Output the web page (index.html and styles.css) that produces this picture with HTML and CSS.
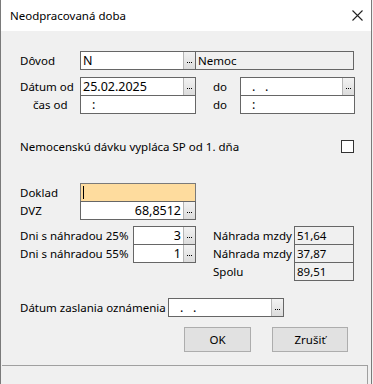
FILE: index.html
```html
<!DOCTYPE html>
<html lang="sk">
<head>
    <meta charset="UTF-8">
    <title>Neodpracovaná doba</title>
    <link rel="stylesheet" href="styles.css">
</head>
<body>
    <div class="window">
        <div class="titlebar">
            <span class="title">Neodpracovaná doba</span>
            <svg class="close" width="11" height="11" viewBox="0 0 11 11">
                <path d="M0.5 0.5 L10.5 10.5 M10.5 0.5 L0.5 10.5" stroke="#222" stroke-width="1.1" fill="none"/>
            </svg>
        </div>

        <div class="content">
            <div class="row">
                <span class="lbl w60">Dôvod</span>
                <div class="field w116"><span class="val">N</span><span class="btn"></span></div>
                <div class="field ro w159 join"><span class="val">Nemoc</span></div>
            </div>

            <div class="row gap7">
                <span class="lbl w60">Dátum od</span>
                <div class="field w116"><span class="val">25.02.2025</span><span class="btn"></span></div>
                <span class="lbl do">do</span>
                <div class="field w115"><span class="val mask"><i>.</i><i>.</i></span><span class="btn"></span></div>
            </div>
            <div class="row stack">
                <span class="lbl w60 indent">čas od</span>
                <div class="field w116"><span class="val mask"><i>:</i></span></div>
                <span class="lbl do">do</span>
                <div class="field w115"><span class="val mask"><i>:</i></span></div>
            </div>

            <div class="row gap23 check-row">
                <span class="lbl">Nemocenskú dávku vypláca SP od 1. dňa</span>
                <span class="checkbox"></span>
            </div>

            <div class="row gap27">
                <span class="lbl w60">Doklad</span>
                <div class="field w116 active"><span class="val"><span class="caret"></span></span></div>
            </div>
            <div class="row stack">
                <span class="lbl w60">DVZ</span>
                <div class="field w116"><span class="val num">68,8512</span><span class="btn"></span></div>
            </div>

            <div class="calc gap6">
                <div class="calc-col">
                    <div class="row">
                        <span class="lbl w113">Dni s náhradou 25%</span>
                        <div class="field w63"><span class="val num">3</span><span class="btn"></span></div>
                    </div>
                    <div class="row stack">
                        <span class="lbl w113">Dni s náhradou 55%</span>
                        <div class="field w63"><span class="val num">1</span><span class="btn"></span></div>
                    </div>
                </div>
                <div class="calc-col right">
                    <div class="row">
                        <span class="lbl w81">Náhrada mzdy</span>
                        <div class="field ro w60"><span class="val">51,64</span></div>
                    </div>
                    <div class="row stack">
                        <span class="lbl w81">Náhrada mzdy</span>
                        <div class="field ro w60"><span class="val">37,87</span></div>
                    </div>
                    <div class="row stack">
                        <span class="lbl w81">Spolu</span>
                        <div class="field ro w60"><span class="val">89,51</span></div>
                    </div>
                </div>
            </div>

            <div class="row gap17">
                <span class="lbl w148">Dátum zaslania oznámenia</span>
                <div class="field w116"><span class="val mask"><i>.</i><i>.</i></span><span class="btn"></span></div>
            </div>

            <div class="buttons">
                <button class="ok">OK</button>
                <button class="cancel">Zrušiť</button>
            </div>
        </div>

        <div class="statusbar"><div class="panel"></div></div>
    </div>
</body>
</html>
```

FILE: styles.css
```css
* {
    box-sizing: border-box;
}
html, body {
    margin: 0;
    padding: 0;
    background: #f0f0f0;
}
body {
    font-family: "Noto Sans", "Open Sans", sans-serif;
    font-size: 11.5px;
    color: #000;
}
.window {
    width: 372px;
    height: 384px;
    border-left: 1px solid #7a7a7a;
    border-right: 1px solid #7a7a7a;
    display: flex;
    flex-direction: column;
    background: #f0f0f0;
}
.titlebar {
    height: 31px;
    background: #fff;
    display: flex;
    align-items: center;
    justify-content: space-between;
    padding: 0 8px 0 9px;
}
.title {
    margin-top: -1px;
}
.close {
    display: block;
}
.content {
    flex: 1;
    display: flex;
    flex-direction: column;
    padding: 20px 16px 0 19px;
}
.row {
    display: flex;
    align-items: center;
    height: 19px;
}
.stack {
    margin-top: -1px;
}
.gap6 { margin-top: 6px; }
.gap7 { margin-top: 7px; }
.gap17 { margin-top: 17px; }
.gap23 { margin-top: 23px; }
.gap27 { margin-top: 27px; }

.lbl {
    white-space: nowrap;
    flex-shrink: 0;
}
.w60 { width: 60px; }
.w81 { width: 81px; }
.w113 { width: 113px; }
.w148 { width: 148px; }
.indent {
    padding-left: 13px;
}
.do {
    width: 44px;
    padding-left: 17px;
}

.field {
    display: flex;
    flex-shrink: 0;
    height: 19px;
    border: 1px solid #666;
    background: #fff;
}
.w60.field { width: 60px; }
.w63 { width: 63px; }
.w115 { width: 115px; }
.w116 { width: 116px; }
.w159 { width: 159px; }
.join {
    margin-left: -1px;
}
.field.ro {
    background: #f0f0f0;
}
.field.ro .val {
    font-size: 11.5px;
}
.field.active {
    background: #fedc9e;
    border-color: #7a7a7a;
}
.val {
    flex: 1;
    padding: 0 2px;
    font-size: 12.5px;
    line-height: 17px;
    white-space: nowrap;
    overflow: hidden;
    display: flex;
    align-items: center;
}
.num {
    justify-content: flex-end;
    padding-right: 2px;
}
.mask {
    padding-left: 11px;
}
.mask i {
    font-style: normal;
    width: 13px;
}
.caret {
    display: block;
    width: 1px;
    height: 13px;
    background: #000;
}
.btn {
    width: 12px;
    flex-shrink: 0;
    border-left: 1px solid #b5b5b5;
    background: linear-gradient(#f2f2f2, #dcdcdc);
    display: flex;
    align-items: center;
    justify-content: center;
    padding-top: 3px;
}
.btn::after {
    content: "";
    width: 1px;
    height: 1px;
    background: #000;
    margin-right: 4px;
    box-shadow: 2px 0 #000, 4px 0 #000;
}

.check-row {
    justify-content: space-between;
    width: 334px;
}
.checkbox {
    width: 13px;
    height: 13px;
    border: 1px solid #333;
    background: #fff;
}

.calc {
    display: flex;
}
.calc-col.right {
    margin-left: 17px;
}

.buttons {
    display: flex;
    margin-top: 10px;
    padding-left: 164px;
}
button {
    font-family: inherit;
    font-size: 11.5px;
    color: #000;
    height: 25px;
    background: #e1e1e1;
    border: 1px solid #adadad;
    padding: 0;
}
.ok {
    width: 67px;
}
.cancel {
    width: 76px;
    margin-left: 21px;
}

.statusbar {
    height: 19px;
    padding-left: 1px;
    padding-right: 3px;
}
.panel {
    height: 100%;
    border-top: 1px solid #a0a0a0;
    border-right: 1px solid #a0a0a0;
}
```
